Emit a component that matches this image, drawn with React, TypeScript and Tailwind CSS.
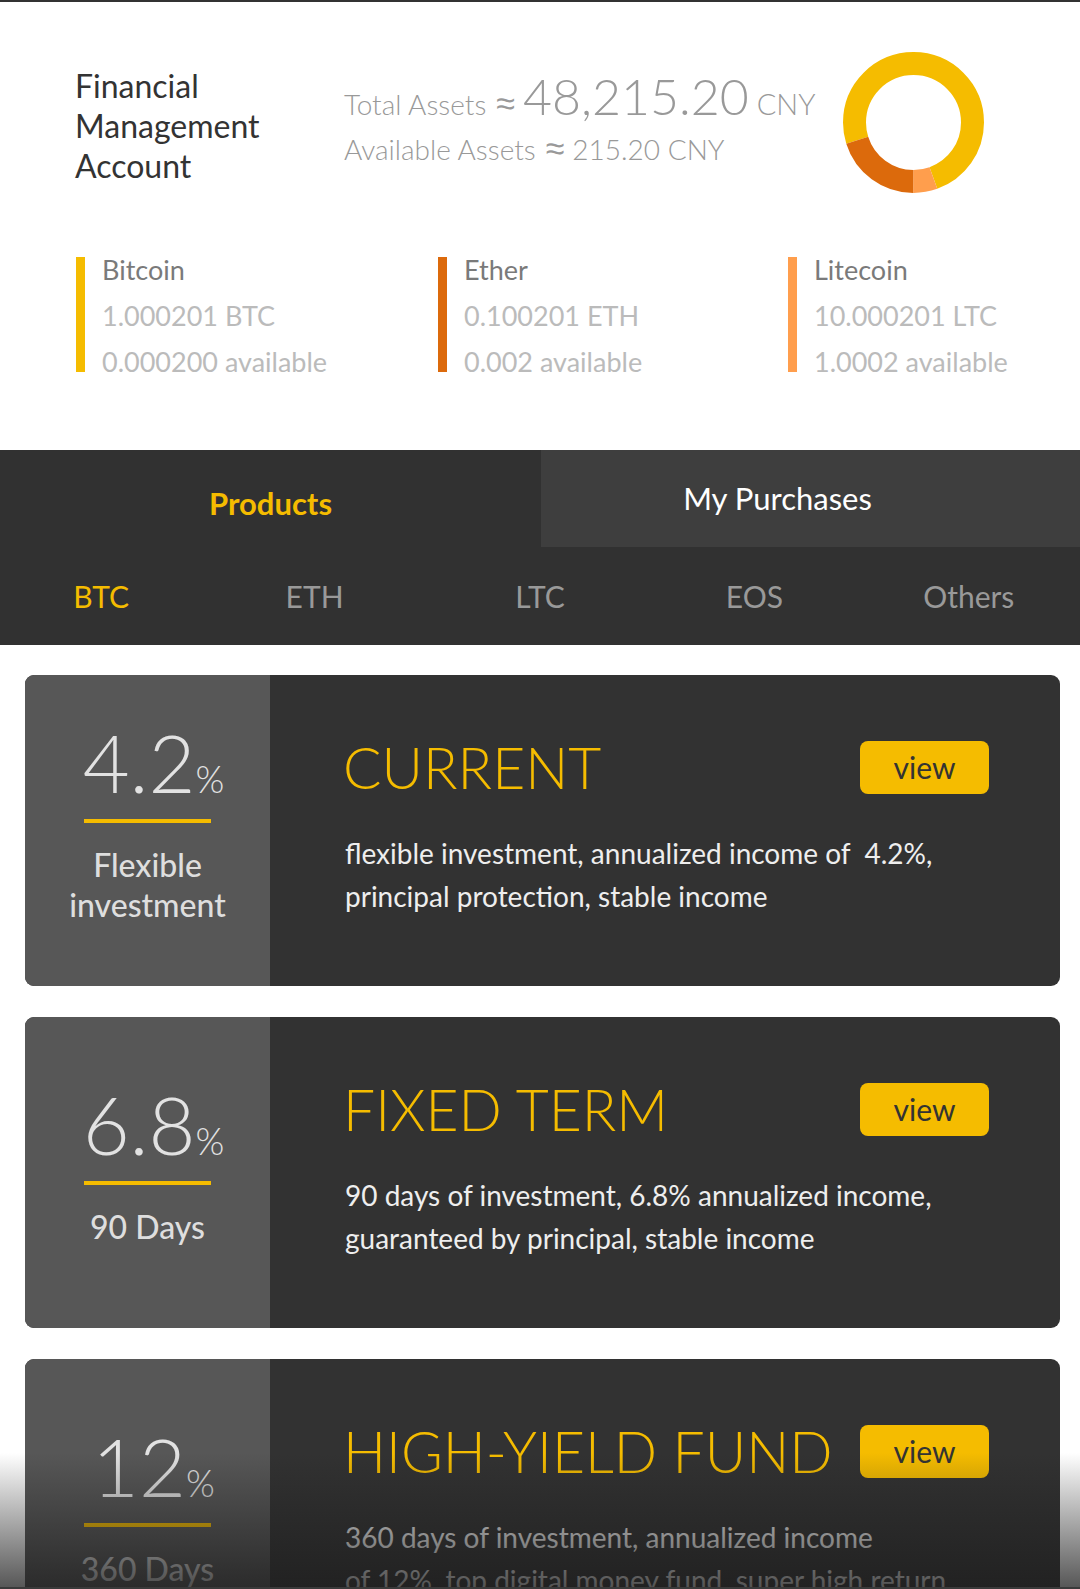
import React from "react";

const coins = [
  { name: "Bitcoin", amount: "1.000201 BTC", avail: "0.000200 available", bar: "bg-[#f5bc00]", w: "w-[362px]" },
  { name: "Ether", amount: "0.100201 ETH", avail: "0.002 available", bar: "bg-[#dc6a0c]", w: "w-[350px]" },
  { name: "Litecoin", amount: "10.000201 LTC", avail: "1.0002 available", bar: "bg-[#ff9e4d]", w: "w-[260px]" },
];

const products = [
  {
    rate: "4.2",
    label: ["Flexible", "investment"],
    title: "CURRENT",
    desc: ["flexible investment, annualized income of  4.2%,", "principal protection, stable income"],
  },
  {
    rate: "6.8",
    label: ["90 Days"],
    title: "FIXED TERM",
    desc: ["90 days of investment, 6.8% annualized income,", "guaranteed by principal, stable income"],
  },
  {
    rate: "12",
    label: ["360 Days"],
    title: "HIGH-YIELD FUND",
    desc: ["360 days of investment, annualized income", "of 12%, top digital money fund, super high return"],
  },
];

// donut segments, degrees clockwise from top
const R = 59;
const C = 2 * Math.PI * R;
const segments = [
  { from: 252, to: 520, color: "#f5bc00" },
  { from: 160, to: 180, color: "#ff9e4d" },
  { from: 180, to: 252, color: "#dc6a0c" },
];

const Donut: React.FC = () => (
  <svg width="141" height="141" viewBox="0 0 141 141">
    <g transform="rotate(-90 70.5 70.5)">
      {segments.map((s) => {
        const len = ((s.to - s.from) / 360) * C;
        return (
          <circle
            key={s.color}
            cx="70.5"
            cy="70.5"
            r={R}
            fill="none"
            stroke={s.color}
            strokeWidth="23"
            strokeDasharray={`${len} ${C - len}`}
            strokeDashoffset={-(s.from / 360) * C}
          />
        );
      })}
    </g>
  </svg>
);

const Approx: React.FC = () => (
  <span className="font-['Noto_Sans',sans-serif] font-light text-[34px] leading-none ml-[10px] mr-[8px]">≈</span>
);

const App: React.FC = () => {
  return (
    <div className="relative w-[1080px] h-[1589px] overflow-hidden bg-white font-['Lato',sans-serif] border-t-2 border-[#333]">
      {/* account summary */}
      <div className="flex items-center pt-[50px] pl-[75px]">
        <div className="w-[269px] pt-[6px] text-[32px] leading-[40px] text-[#333]">
          Financial
          <br />
          Management
          <br />
          Account
        </div>
        <div className="w-[499px] font-light text-[#999]">
          <div className="flex items-baseline h-[48px] -mt-[5px] whitespace-nowrap">
            <span className="text-[28px]">Total Assets</span>
            <Approx />
            <span className="text-[50px] leading-none">48,215.20</span>
            <span className="text-[29px] ml-[8px]">CNY</span>
          </div>
          <div className="flex items-baseline text-[28px] mt-[9px] whitespace-nowrap">
            <span>Available Assets</span>
            <Approx />
            <span>215.20 CNY</span>
          </div>
        </div>
        <Donut />
      </div>

      {/* coins */}
      <div className="flex pl-[76px] mt-[64px]">
        {coins.map((c) => (
          <div key={c.name} className={`flex gap-[17px] ${c.w}`}>
            <div className={`w-[9px] h-[115px] ${c.bar}`} />
            <div className="text-[27px] leading-[46px] -mt-[10px]">
              <div className="text-[#7a7a7a]">{c.name}</div>
              <div className="text-[#bbb]">{c.amount}</div>
              <div className="text-[#bbb]">{c.avail}</div>
            </div>
          </div>
        ))}
      </div>

      {/* tabs */}
      <div className="mt-[65px] bg-[#313131]">
        <div className="flex h-[97px]">
          <div className="w-[541px] flex items-center justify-center pt-[10px] text-[31px] font-bold text-[#f5bc00]">
            Products
          </div>
          <div className="flex-1 flex items-center justify-center pr-[66px] bg-[#3e3e3e] text-[31px] text-white">
            My Purchases
          </div>
        </div>
        <div className="grid grid-cols-5 h-[98px] items-center text-[30px] text-[#999] px-[4px]">
          <div className="text-center text-[#f5bc00] -ml-[20px]">BTC</div>
          <div className="text-center -ml-[22px]">ETH</div>
          <div className="text-center">LTC</div>
          <div className="text-center">EOS</div>
          <div className="text-center">Others</div>
        </div>
      </div>

      {/* products */}
      <div className="flex flex-col gap-[31px] pt-[30px] pl-[25px]">
        {products.map((p) => (
          <div key={p.title} className="flex w-[1035px] h-[311px] rounded-[9px] overflow-hidden bg-[#323232]">
            <div className="w-[245px] shrink-0 bg-[#575757] flex flex-col items-center justify-center pb-[16px] text-[#e2e2e2]">
              <div className="flex items-baseline pl-[12px] h-[78px]">
                <span className="text-[81px] font-light leading-none">{p.rate}</span>
                <span className="text-[37px] font-light leading-none">%</span>
              </div>
              <div className="w-[127px] h-[4px] bg-[#f5bc00] mt-[20px]" />
              <div className="mt-[22px] text-[32px] font-medium leading-[40px] text-center text-[#dedede]">
                {p.label.map((l) => (
                  <div key={l}>{l}</div>
                ))}
              </div>
            </div>
            <div className="flex-1 pl-[73px] pr-[71px] pt-[60px]">
              <div className="flex items-center justify-between h-[64px]">
                <div className="text-[57px] font-light leading-none text-[#f5bc00] whitespace-nowrap">{p.title}</div>
                <div className="w-[129px] h-[53px] shrink-0 rounded-[8px] bg-[#f5bc00] flex items-center justify-center text-[30px] text-[#333]">
                  view
                </div>
              </div>
              <div className="mt-[33px] pl-[2px] text-[28px] leading-[43px] text-[#eee] whitespace-pre">
                {p.desc.map((d) => (
                  <div key={d}>{d}</div>
                ))}
              </div>
            </div>
          </div>
        ))}
      </div>

      {/* bottom fade */}
      <div className="absolute left-0 right-0 bottom-0 h-[136px] bg-linear-to-b from-transparent to-[#1c1c1cbf]" />
      <div className="absolute left-0 right-0 bottom-0 h-[2px] bg-[#3a3a3a]" />
    </div>
  );
};

export default App;
